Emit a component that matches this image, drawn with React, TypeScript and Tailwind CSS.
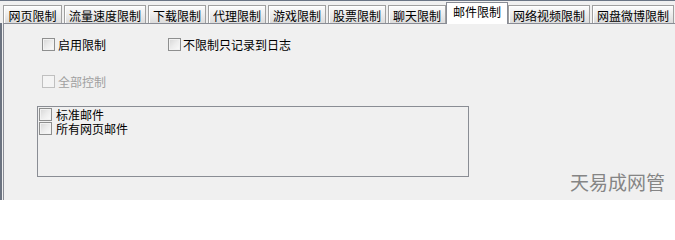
import React from "react";

const tabs = [
  { label: "网页限制", w: "w-[59px]" },
  { label: "流量速度限制", w: "w-[82px]" },
  { label: "下载限制", w: "w-[58px]" },
  { label: "代理限制", w: "w-[58px]" },
  { label: "游戏限制", w: "w-[58px]" },
  { label: "股票限制", w: "w-[58px]" },
  { label: "聊天限制", w: "w-[58px]" },
  { label: "邮件限制", w: "w-[62px]", active: true },
  { label: "网络视频限制", w: "w-[82px]" },
  { label: "网盘微博限制", w: "w-[82px]" },
];

function Box({ disabled }: { disabled?: boolean }) {
  return (
    <span
      className={
        disabled
          ? "box-border block h-[13px] w-[13px] shrink-0 border border-[#c0c0c0] bg-[#f4f4f4]"
          : "box-border block h-[13px] w-[13px] shrink-0 border border-[#8e8f8f] bg-gradient-to-br from-[#d6d6d6] via-[#ececec] to-[#fbfbfb] shadow-[inset_0_0_0_1px_#f2f2f2]"
      }
    />
  );
}

function Check({ label, disabled, gap = "gap-[3px]", w }: { label: string; disabled?: boolean; gap?: string; w?: string }) {
  return (
    <div className={`flex h-[13px] items-center ${gap} ${w ?? ""}`}>
      <Box disabled={disabled} />
      <span className={`text-[12px] leading-[12px] whitespace-nowrap ${disabled ? "text-[#a0a0a0]" : "text-black"}`}>
        {label}
      </span>
    </div>
  );
}

export default function App() {
  return (
    <div
      className="relative flex h-[200px] w-[675px] flex-col overflow-hidden bg-[#f0f0f0]"
      style={{ fontFamily: '"Noto Sans CJK SC", "Noto Sans", sans-serif' }}
    >
      <div className="h-px w-full bg-[#6b7585]" />
      <div className="flex h-[22px] items-end gap-[2px] pl-[3px]">
        {tabs.map((t) =>
          t.active ? (
            <div
              key={t.label}
              className={`relative z-10 mx-[-2px] -mb-px box-border flex h-[22px] ${t.w} justify-center border-x border-t border-[#898c95] bg-white pt-[2px] text-[12px] leading-[13px] text-black`}
            >
              {t.label}
            </div>
          ) : (
            <div
              key={t.label}
              className={`box-border flex h-[18px] ${t.w} justify-center border-x border-t border-[#a0a0a0] bg-gradient-to-b from-[#fdfdfd] to-[#dcdcdc] pt-[3px] text-[12px] leading-[13px] text-black shadow-[inset_1px_1px_0_#ffffff]`}
            >
              {t.label}
            </div>
          )
        )}
      </div>
      <div className="flex flex-1 border-l-2 border-[#6b7380]">
        <div className="ml-px flex flex-1 flex-col border-l border-t border-[#898c95] bg-[#f0f0f0] pt-[14px]">
          <div className="flex pl-[38px]">
            <Check label="启用限制" w="w-[126px]" />
            <Check label="不限制只记录到日志" gap="gap-[2px]" />
          </div>
          <div className="mt-[24px] pl-[38px]">
            <Check label="全部控制" disabled />
          </div>
          <div className="mt-[18px] ml-[33px] box-border flex h-[71px] w-[432px] flex-col gap-px border border-[#8a8d94] pl-px pt-px">
            <Check label="标准邮件" gap="gap-[4px]" />
            <Check label="所有网页邮件" gap="gap-[4px]" />
          </div>
        </div>
      </div>
      <div className="absolute left-[570px] top-[172px] text-[19px] leading-[20px] text-[#858585]">
        天易成网管
      </div>
    </div>
  );
}
